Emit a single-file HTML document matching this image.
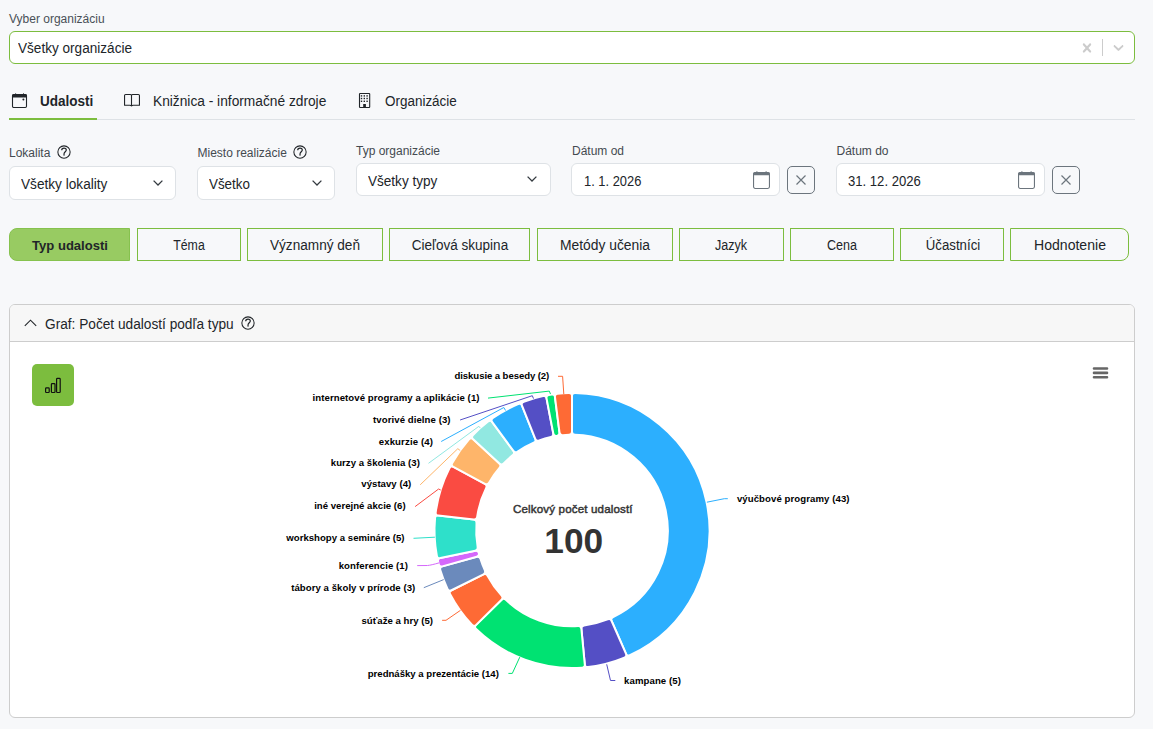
<!DOCTYPE html>
<html><head><meta charset="utf-8">
<style>
*{box-sizing:border-box;margin:0;padding:0}
html,body{width:1153px;height:729px;overflow:hidden;background:#f7f8fa;font-family:"Liberation Sans",sans-serif;color:#212529}
.a{position:absolute;white-space:nowrap;line-height:1}
.box{position:absolute;background:#fff;border:1px solid #dee2e6;border-radius:6px}
.lbl{font-size:12px;color:#444a50}
.val{font-size:13.6px;color:#212529}
.btn{position:absolute;top:228px;height:33px;border:1px solid #7cbd3e;background:transparent;color:#212529;text-align:center;white-space:nowrap}
.xb{position:absolute;top:166px;width:28px;height:28px;border:1.5px solid #6c757d;border-radius:5px}
svg{position:absolute;overflow:visible}
</style></head><body>

<!-- org select -->
<div class="a lbl" style="left:9px;top:13px;font-size:12px;color:#495057">Vyber organizáciu</div>
<div class="box" style="left:9px;top:31px;width:1126px;height:33px;border-color:#7cbd3e;border-radius:6px"></div>
<div class="a" style="left:18.00px;top:41px;font-size:14px;color:#212529;transform:scaleX(0.9702);transform-origin:0 0">Všetky organizácie</div>
<svg style="left:1078px;top:39px" width="18" height="18" viewBox="0 0 20 20"><path fill="#ccc" d="M14.348 14.849c-0.469 0.469-1.229 0.469-1.697 0l-2.651-3.030-2.651 3.029c-0.469 0.469-1.229 0.469-1.697 0-0.469-0.469-0.469-1.229 0-1.697l2.758-3.15-2.759-3.152c-0.469-0.469-0.469-1.228 0-1.697s1.228-0.469 1.697 0l2.652 3.031 2.651-3.031c0.469-0.469 1.228-0.469 1.697 0s0.469 1.229 0 1.697l-2.758 3.152 2.758 3.15c0.469 0.469 0.469 1.229 0 1.698z"/></svg>
<div style="position:absolute;left:1102px;top:39px;width:1px;height:17px;background:#ccc"></div>
<svg style="left:1110px;top:39px" width="17" height="17" viewBox="0 0 20 20"><path fill="#ccc" d="M4.516 7.548c0.436-0.446 1.043-0.481 1.576 0l3.908 3.747 3.908-3.747c0.533-0.481 1.141-0.446 1.574 0 0.436 0.445 0.408 1.197 0 1.615-0.406 0.418-4.695 4.502-4.695 4.502-0.217 0.223-0.502 0.335-0.787 0.335s-0.57-0.112-0.789-0.335c0 0-4.287-4.084-4.695-4.502s-0.436-1.17 0-1.615z"/></svg>

<!-- tabs -->
<svg style="left:12px;top:93px" width="15" height="15" viewBox="0 0 15 15"><rect x="0.5" y="1.5" width="14" height="13" rx="1.2" fill="none" stroke="#212529" stroke-width="1.1"/><rect x="0.3" y="1.2" width="14.4" height="3.2" rx="0.8" fill="#212529"/><rect x="3.2" y="0.3" width="0.9" height="1.2" fill="#212529"/><rect x="11" y="0.3" width="0.9" height="1.2" fill="#212529"/><circle cx="11.4" cy="6.5" r="1" fill="#212529"/></svg>
<div class="a" style="left:40.00px;top:94px;font-size:14px;font-weight:bold;color:#212529;transform:scaleX(0.9651);transform-origin:0 0">Udalosti</div>
<svg style="left:124px;top:94px" width="16" height="12.5" viewBox="0 0 16 12.5"><path d="M0.55 11.3V1.6Q0.55 0.55 1.6 0.55H6.4Q7.1 0.55 7.5 1.2Q7.9 0.55 8.6 0.55H14.4Q15.45 0.55 15.45 1.6V11.3H9.2Q8 11.3 7.5 11.8Q7 11.3 5.8 11.3Z M7.5 1.2V11.6" fill="none" stroke="#212529" stroke-width="1.1" stroke-linejoin="round"/></svg>
<div class="a" style="left:152.80px;top:94px;font-size:14px;color:#212529;transform:scaleX(0.9811);transform-origin:0 0">Knižnica - informačné zdroje</div>
<svg style="left:359px;top:93px" width="11" height="15" viewBox="0 0 11 15"><rect x="0.5" y="0.5" width="10.2" height="14" rx="0.6" fill="none" stroke="#212529" stroke-width="1.1"/><g fill="#212529"><rect x="1.80" y="2.20" width="1.4" height="1.4"/><rect x="4.60" y="2.20" width="1.4" height="1.4"/><rect x="7.40" y="2.20" width="1.4" height="1.4"/><rect x="1.80" y="4.80" width="1.4" height="1.4"/><rect x="4.60" y="4.80" width="1.4" height="1.4"/><rect x="7.40" y="4.80" width="1.4" height="1.4"/><rect x="1.80" y="7.60" width="1.4" height="1.4"/><rect x="4.60" y="7.60" width="1.4" height="1.4"/><rect x="7.40" y="7.60" width="1.4" height="1.4"/><rect x="4.2" y="11" width="2.7" height="3.8"/></g></svg>
<div class="a" style="left:384.90px;top:94px;font-size:14px;color:#212529;transform:scaleX(0.9611);transform-origin:0 0">Organizácie</div>
<div style="position:absolute;left:9px;top:119px;width:1126px;height:1px;background:#dee2e6"></div>
<div style="position:absolute;left:9px;top:118px;width:88px;height:2px;background:#7cbd3e"></div>

<!-- filters -->
<div class="a lbl" style="left:9px;top:147px">Lokalita</div>
<svg style="left:57px;top:145px" width="14" height="14" viewBox="0 0 14 14"><circle cx="7" cy="7" r="6.15" fill="none" stroke="#212529" stroke-width="1.05"/><path d="M4.7 5.2C4.7 3.8 5.6 3.1 7 3.1C8.4 3.1 9.3 3.9 9.3 5C9.3 6.6 7.4 6.8 7.1 8.5L6.95 10.6" fill="none" stroke="#212529" stroke-width="1.2"/></svg>
<div class="box" style="left:9px;top:166px;width:167px;height:34px"></div>
<div class="a" style="left:20.50px;top:177px;font-size:14px;color:#212529;transform:scaleX(0.9742);transform-origin:0 0">Všetky lokality</div>
<svg style="left:153px;top:180px" width="10" height="6" viewBox="0 0 10 6"><path d="M0.6 0.6L5 5L9.4 0.6" fill="none" stroke="#343a40" stroke-width="1.3"/></svg>

<div class="a lbl" style="left:197.5px;top:147px">Miesto realizácie</div>
<svg style="left:293px;top:145px" width="14" height="14" viewBox="0 0 14 14"><circle cx="7" cy="7" r="6.15" fill="none" stroke="#212529" stroke-width="1.05"/><path d="M4.7 5.2C4.7 3.8 5.6 3.1 7 3.1C8.4 3.1 9.3 3.9 9.3 5C9.3 6.6 7.4 6.8 7.1 8.5L6.95 10.6" fill="none" stroke="#212529" stroke-width="1.2"/></svg>
<div class="box" style="left:197px;top:166px;width:138px;height:34px"></div>
<div class="a" style="left:208.60px;top:177px;font-size:14px;color:#212529;transform:scaleX(0.9557);transform-origin:0 0">Všetko</div>
<svg style="left:312px;top:180px" width="10" height="6" viewBox="0 0 10 6"><path d="M0.6 0.6L5 5L9.4 0.6" fill="none" stroke="#343a40" stroke-width="1.3"/></svg>

<div class="a lbl" style="left:356px;top:145px">Typ organizácie</div>
<div class="box" style="left:356px;top:163px;width:195px;height:33px"></div>
<div class="a" style="left:367.60px;top:174px;font-size:14px;color:#212529;transform:scaleX(0.9681);transform-origin:0 0">Všetky typy</div>
<svg style="left:527px;top:176px" width="10" height="6" viewBox="0 0 10 6"><path d="M0.6 0.6L5 5L9.4 0.6" fill="none" stroke="#343a40" stroke-width="1.3"/></svg>

<div class="a lbl" style="left:572px;top:145px">Dátum od</div>
<div class="box" style="left:571px;top:163px;width:209px;height:33px"></div>
<div class="a" style="left:584.00px;top:174px;font-size:14px;color:#212529;transform:scaleX(0.9202);transform-origin:0 0">1. 1. 2026</div>
<svg style="left:753px;top:171px" width="17" height="18" viewBox="0 0 17 18"><rect x="0.55" y="1.55" width="15.9" height="15.9" rx="1.6" fill="none" stroke="#6c757d" stroke-width="1.1"/><rect x="0.3" y="1.2" width="16.4" height="3" rx="1" fill="#6c757d"/><rect x="3.4" y="0.2" width="1" height="1.3" fill="#6c757d"/><rect x="12.6" y="0.2" width="1" height="1.3" fill="#6c757d"/></svg>
<div class="xb" style="left:787px"></div>
<svg style="left:796px;top:175px" width="10" height="10" viewBox="0 0 10 10"><path d="M0.5 0.5L9.5 9.5M9.5 0.5L0.5 9.5" stroke="#6c757d" stroke-width="1.2"/></svg>

<div class="a lbl" style="left:836.5px;top:145px">Dátum do</div>
<div class="box" style="left:836px;top:163px;width:209px;height:33px"></div>
<div class="a" style="left:847.90px;top:174px;font-size:14px;color:#212529;transform:scaleX(0.9351);transform-origin:0 0">31. 12. 2026</div>
<svg style="left:1018px;top:171px" width="17" height="18" viewBox="0 0 17 18"><rect x="0.55" y="1.55" width="15.9" height="15.9" rx="1.6" fill="none" stroke="#6c757d" stroke-width="1.1"/><rect x="0.3" y="1.2" width="16.4" height="3" rx="1" fill="#6c757d"/><rect x="3.4" y="0.2" width="1" height="1.3" fill="#6c757d"/><rect x="12.6" y="0.2" width="1" height="1.3" fill="#6c757d"/></svg>
<div class="xb" style="left:1052px"></div>
<svg style="left:1061px;top:175px" width="10" height="10" viewBox="0 0 10 10"><path d="M0.5 0.5L9.5 9.5M9.5 0.5L0.5 9.5" stroke="#6c757d" stroke-width="1.2"/></svg>

<!-- button group -->
<div class="btn" style="left:9px;width:121px;background:#98cb62;border-color:#86c24e;border-radius:8px 0 0 8px"><span style="position:absolute;left:-40.20px;width:200px;top:10px;line-height:1;font-size:13.5px;font-weight:bold;transform:scaleX(0.9656)">Typ udalosti</span></div>
<div class="btn" style="left:137px;width:104px"><span style="position:absolute;left:-49.25px;width:200px;top:9px;line-height:1;font-size:14px;transform:scaleX(0.8799)">Téma</span></div>
<div class="btn" style="left:247px;width:136px"><span style="position:absolute;left:-33.00px;width:200px;top:9px;line-height:1;font-size:14px;transform:scaleX(0.9718)">Významný deň</span></div>
<div class="btn" style="left:389px;width:141px"><span style="position:absolute;left:-30.45px;width:200px;top:9px;line-height:1;font-size:14px;transform:scaleX(0.9647)">Cieľová skupina</span></div>
<div class="btn" style="left:537px;width:136px"><span style="position:absolute;left:-33.05px;width:200px;top:9px;line-height:1;font-size:14px;transform:scaleX(0.9893)">Metódy učenia</span></div>
<div class="btn" style="left:679px;width:105px"><span style="position:absolute;left:-48.75px;width:200px;top:9px;line-height:1;font-size:14px;transform:scaleX(0.8963)">Jazyk</span></div>
<div class="btn" style="left:790px;width:104px"><span style="position:absolute;left:-49.40px;width:200px;top:9px;line-height:1;font-size:14px;transform:scaleX(0.8962)">Cena</span></div>
<div class="btn" style="left:900px;width:104px"><span style="position:absolute;left:-48.50px;width:200px;top:9px;line-height:1;font-size:14px;transform:scaleX(0.9450)">Účastníci</span></div>
<div class="btn" style="left:1010px;width:119px;border-radius:0 8px 8px 0"><span style="position:absolute;left:-41.25px;width:200px;top:9px;line-height:1;font-size:14px;transform:scaleX(1.0040)">Hodnotenie</span></div>

<!-- card -->
<div style="position:absolute;left:9px;top:304px;width:1126px;height:414px;background:#fff;border:1px solid #cdcdcd;border-radius:6px;overflow:hidden">
  <div style="position:absolute;left:0;top:0;width:100%;height:37px;background:#f7f7f7;border-bottom:1px solid #cdcdcd"></div>
</div>
<svg style="left:24px;top:319px" width="13" height="8" viewBox="0 0 13 8"><path d="M0.8 6.8L6.5 1.2L12.2 6.8" fill="none" stroke="#212529" stroke-width="1.1"/></svg>
<div class="a" style="left:44.90px;top:317px;font-size:14px;color:#212529;transform:scaleX(0.9767);transform-origin:0 0">Graf: Počet udalostí podľa typu</div>
<svg style="left:241px;top:316px" width="14" height="14" viewBox="0 0 14 14"><circle cx="7" cy="7" r="6.15" fill="none" stroke="#212529" stroke-width="1.05"/><path d="M4.7 5.2C4.7 3.8 5.6 3.1 7 3.1C8.4 3.1 9.3 3.9 9.3 5C9.3 6.6 7.4 6.8 7.1 8.5L6.95 10.6" fill="none" stroke="#212529" stroke-width="1.2"/></svg>

<div style="position:absolute;left:32px;top:364px;width:42px;height:42px;background:#7cbd3e;border-radius:5px"></div>
<svg style="left:44px;top:377px" width="18" height="17" viewBox="0 0 18 17"><g fill="none" stroke="#111" stroke-width="1.2"><rect x="1.6" y="10.9" width="3.6" height="4.6" rx="0.8"/><rect x="7.4" y="6.6" width="3.6" height="8.9" rx="0.8"/><rect x="12.6" y="1.4" width="3.6" height="14.1" rx="0.8"/></g></svg>

<svg style="left:1092px;top:366px" width="17" height="14" viewBox="0 0 17 14"><g stroke="#666" stroke-width="2.6" stroke-linecap="round"><path d="M2 2.5H15M2 6.9H15M2 11.2H15"/></g></svg>

<svg style="left:0;top:0" width="1153" height="729" viewBox="0 0 1153 729">
<path d="M575.00 393.03 A137.50 137.50 0 0 1 629.86 655.23 Q627.13 656.46 625.93 653.72 L611.61 621.01 Q610.41 618.26 613.14 617.02 A95.80 95.80 0 0 0 575.00 434.75 Q572.00 434.70 572.00 431.70 L572.00 396.00 Q572.00 393.00 575.00 393.03 Z" fill="#2caffe" stroke="#fff" stroke-width="2" stroke-linejoin="round"/>
<path d="M624.37 657.64 A137.50 137.50 0 0 1 588.05 667.06 Q585.07 667.38 584.79 664.39 L581.39 628.85 Q581.11 625.87 584.09 625.53 A95.80 95.80 0 0 0 607.64 619.42 Q610.41 618.26 611.61 621.01 L625.93 653.72 Q627.13 656.46 624.37 657.64 Z" fill="#544fc5" stroke="#fff" stroke-width="2" stroke-linejoin="round"/>
<path d="M582.08 667.63 A137.50 137.50 0 0 1 476.13 629.07 Q474.00 626.95 476.14 624.85 L501.59 599.81 Q503.72 597.70 505.86 599.81 A95.80 95.80 0 0 0 578.12 626.10 Q581.11 625.87 581.39 628.85 L584.79 664.39 Q585.07 667.38 582.08 667.63 Z" fill="#00e272" stroke="#fff" stroke-width="2" stroke-linejoin="round"/>
<path d="M471.92 624.79 A137.50 137.50 0 0 1 450.16 594.23 Q448.80 591.56 451.49 590.23 L483.48 574.37 Q486.16 573.04 487.54 575.71 A95.80 95.80 0 0 0 501.65 595.53 Q503.72 597.70 501.59 599.81 L476.14 624.85 Q474.00 626.95 471.92 624.79 Z" fill="#fe6a35" stroke="#fff" stroke-width="2" stroke-linejoin="round"/>
<path d="M447.50 588.86 A137.50 137.50 0 0 1 440.30 570.02 Q439.47 567.14 442.36 566.34 L476.77 556.83 Q479.66 556.03 480.51 558.91 A95.80 95.80 0 0 0 484.87 570.33 Q486.16 573.04 483.48 574.37 L451.49 590.23 Q448.80 591.56 447.50 588.86 Z" fill="#6b8abc" stroke="#fff" stroke-width="2" stroke-linejoin="round"/>
<path d="M438.70 564.24 A137.50 137.50 0 0 1 438.06 561.59 Q437.41 558.66 440.35 558.05 L475.29 550.73 Q478.23 550.12 478.89 553.05 A95.80 95.80 0 0 0 478.91 553.12 Q479.66 556.03 476.77 556.83 L442.36 566.34 Q439.47 567.14 438.70 564.24 Z" fill="#d568fb" stroke="#fff" stroke-width="2" stroke-linejoin="round"/>
<path d="M436.83 555.72 A137.50 137.50 0 0 1 435.05 518.24 Q435.35 515.26 438.33 515.59 L473.81 519.55 Q476.79 519.88 476.50 522.87 A95.80 95.80 0 0 0 477.66 547.17 Q478.23 550.12 475.29 550.73 L440.35 558.05 Q437.41 558.66 436.83 555.72 Z" fill="#2ee0ca" stroke="#fff" stroke-width="2" stroke-linejoin="round"/>
<path d="M435.71 512.28 A137.50 137.50 0 0 1 449.41 468.22 Q450.80 465.56 453.44 466.98 L484.91 483.84 Q487.56 485.26 486.18 487.92 A95.80 95.80 0 0 0 477.17 516.91 Q476.79 519.88 473.81 519.55 L438.33 515.59 Q435.35 515.26 435.71 512.28 Z" fill="#fa4b42" stroke="#fff" stroke-width="2" stroke-linejoin="round"/>
<path d="M452.25 462.93 A137.50 137.50 0 0 1 468.98 439.43 Q470.99 437.20 473.20 439.24 L499.42 463.46 Q501.63 465.50 499.63 467.73 A95.80 95.80 0 0 0 489.01 482.63 Q487.56 485.26 484.91 483.84 L453.44 466.98 Q450.80 465.56 452.25 462.93 Z" fill="#feb56a" stroke="#fff" stroke-width="2" stroke-linejoin="round"/>
<path d="M473.05 435.02 A137.50 137.50 0 0 1 488.08 421.58 Q490.48 419.78 492.25 422.19 L513.42 450.94 Q515.20 453.36 512.81 455.17 A95.80 95.80 0 0 0 503.70 463.33 Q501.63 465.50 499.42 463.46 L473.20 439.24 Q470.99 437.20 473.05 435.02 Z" fill="#91e8e1" stroke="#fff" stroke-width="2" stroke-linejoin="round"/>
<path d="M492.91 418.02 A137.50 137.50 0 0 1 518.12 403.99 Q520.90 402.85 522.01 405.63 L535.28 438.78 Q536.39 441.56 533.63 442.72 A95.80 95.80 0 0 0 517.64 451.61 Q515.20 453.36 513.42 450.94 L492.25 422.19 Q490.48 419.78 492.91 418.02 Z" fill="#2caffe" stroke="#fff" stroke-width="2" stroke-linejoin="round"/>
<path d="M523.69 401.76 A137.50 137.50 0 0 1 543.04 396.08 Q545.98 395.48 546.55 398.43 L553.30 433.49 Q553.87 436.43 550.93 437.05 A95.80 95.80 0 0 0 539.20 440.49 Q536.39 441.56 535.28 438.78 L522.01 405.63 Q520.90 402.85 523.69 401.76 Z" fill="#544fc5" stroke="#fff" stroke-width="2" stroke-linejoin="round"/>
<path d="M548.93 394.95 A137.50 137.50 0 0 1 551.62 394.52 Q554.59 394.11 554.97 397.08 L559.49 432.49 Q559.87 435.47 556.90 435.90 A95.80 95.80 0 0 0 556.82 435.91 Q553.87 436.43 553.30 433.49 L546.55 398.43 Q545.98 395.48 548.93 394.95 Z" fill="#00e272" stroke="#fff" stroke-width="2" stroke-linejoin="round"/>
<path d="M557.57 393.76 A137.50 137.50 0 0 1 569.00 393.03 Q572.00 393.00 572.00 396.00 L572.00 431.70 Q572.00 434.70 569.00 434.75 A95.80 95.80 0 0 0 562.85 435.14 Q559.87 435.47 559.49 432.49 L554.97 397.08 Q554.59 394.11 557.57 393.76 Z" fill="#fe6a35" stroke="#fff" stroke-width="2" stroke-linejoin="round"/>
<path d="M727.8 498.7 L724.3 498.7 L706.9 502.2" fill="none" stroke="#2caffe" stroke-width="1"/>
<path d="M615.3 680.5 L610.5 680.5 L606.7 664.3" fill="none" stroke="#544fc5" stroke-width="1"/>
<path d="M508.4 673.4 L512.3 673.4 L519.8 657.1" fill="none" stroke="#00e272" stroke-width="1"/>
<path d="M442.1 620.3 L446.0 620.3 L460.5 610.3" fill="none" stroke="#fe6a35" stroke-width="1"/>
<path d="M423.8 587.7 L443.7 579.6" fill="none" stroke="#6b8abc" stroke-width="1"/>
<path d="M417.2 565.6L427.5 565.5Q431 565.2 439.3 562.8" fill="none" stroke="#d568fb" stroke-width="1"/>
<path d="M413.5 538.3 L434.9 537.2" fill="none" stroke="#2ee0ca" stroke-width="1"/>
<path d="M415.1 506.6 L438.6 489.0 L440.7 490.0" fill="none" stroke="#fa4b42" stroke-width="1"/>
<path d="M420.2 484.8 L457.8 448.7 L460.2 450.5" fill="none" stroke="#feb56a" stroke-width="1"/>
<path d="M428.5 463.3 L478.9 426.3 L480.3 428.1" fill="none" stroke="#91e8e1" stroke-width="1"/>
<path d="M441.2 441.5 L503.8 407.5 L505.6 410.5" fill="none" stroke="#2caffe" stroke-width="1"/>
<path d="M460.1 420.0 L532.3 395.7 L533.5 398.6" fill="none" stroke="#544fc5" stroke-width="1"/>
<path d="M488.0 398.1 L549.3 391.1 L550.5 394.1" fill="none" stroke="#00e272" stroke-width="1"/>
<path d="M558.0 376.3 L562.6 376.3 L563.8 394.1" fill="none" stroke="#fe6a35" stroke-width="1"/>
<text x="736.9" y="502.2" text-anchor="start" font-family="Liberation Sans" font-weight="bold" font-size="9.6" fill="#000" textLength="112.6" lengthAdjust="spacing">výučbové programy (43)</text>
<text x="624.1" y="683.9" text-anchor="start" font-family="Liberation Sans" font-weight="bold" font-size="9.6" fill="#000" textLength="56.8" lengthAdjust="spacing">kampane (5)</text>
<text x="498.9" y="677.0" text-anchor="end" font-family="Liberation Sans" font-weight="bold" font-size="9.6" fill="#000" textLength="131.2" lengthAdjust="spacing">prednášky a prezentácie (14)</text>
<text x="433.0" y="623.9" text-anchor="end" font-family="Liberation Sans" font-weight="bold" font-size="9.6" fill="#000" textLength="71.6" lengthAdjust="spacing">súťaže a hry (5)</text>
<text x="415.3" y="590.6" text-anchor="end" font-family="Liberation Sans" font-weight="bold" font-size="9.6" fill="#000" textLength="124.1" lengthAdjust="spacing">tábory a školy v prírode (3)</text>
<text x="407.9" y="569.0" text-anchor="end" font-family="Liberation Sans" font-weight="bold" font-size="9.6" fill="#000" textLength="69.2" lengthAdjust="spacing">konferencie (1)</text>
<text x="404.5" y="540.9" text-anchor="end" font-family="Liberation Sans" font-weight="bold" font-size="9.6" fill="#000" textLength="118.2" lengthAdjust="spacing">workshopy a semináre (5)</text>
<text x="405.6" y="509.1" text-anchor="end" font-family="Liberation Sans" font-weight="bold" font-size="9.6" fill="#000" textLength="91.4" lengthAdjust="spacing">iné verejné akcie (6)</text>
<text x="411.2" y="487.2" text-anchor="end" font-family="Liberation Sans" font-weight="bold" font-size="9.6" fill="#000" textLength="49.9" lengthAdjust="spacing">výstavy (4)</text>
<text x="419.9" y="465.8" text-anchor="end" font-family="Liberation Sans" font-weight="bold" font-size="9.6" fill="#000" textLength="89.1" lengthAdjust="spacing">kurzy a školenia (3)</text>
<text x="433.0" y="444.6" text-anchor="end" font-family="Liberation Sans" font-weight="bold" font-size="9.6" fill="#000" textLength="54.3" lengthAdjust="spacing">exkurzie (4)</text>
<text x="450.5" y="422.8" text-anchor="end" font-family="Liberation Sans" font-weight="bold" font-size="9.6" fill="#000" textLength="77.4" lengthAdjust="spacing">tvorivé dielne (3)</text>
<text x="479.5" y="400.9" text-anchor="end" font-family="Liberation Sans" font-weight="bold" font-size="9.6" fill="#000" textLength="167.0" lengthAdjust="spacing">internetové programy a aplikácie (1)</text>
<text x="549.3" y="379.3" text-anchor="end" font-family="Liberation Sans" font-weight="bold" font-size="9.6" fill="#000" textLength="94.8" lengthAdjust="spacing">diskusie a besedy (2)</text>
<text x="572.8" y="513" text-anchor="middle" font-family="Liberation Sans" font-size="11.6" fill="#333" stroke="#333" stroke-width="0.45" textLength="119.6" lengthAdjust="spacing">Celkový počet udalostí</text>
<text x="573.8" y="553.3" text-anchor="middle" font-family="Liberation Sans" font-weight="bold" font-size="35.3" fill="#333">100</text>
</svg>

</body></html>
